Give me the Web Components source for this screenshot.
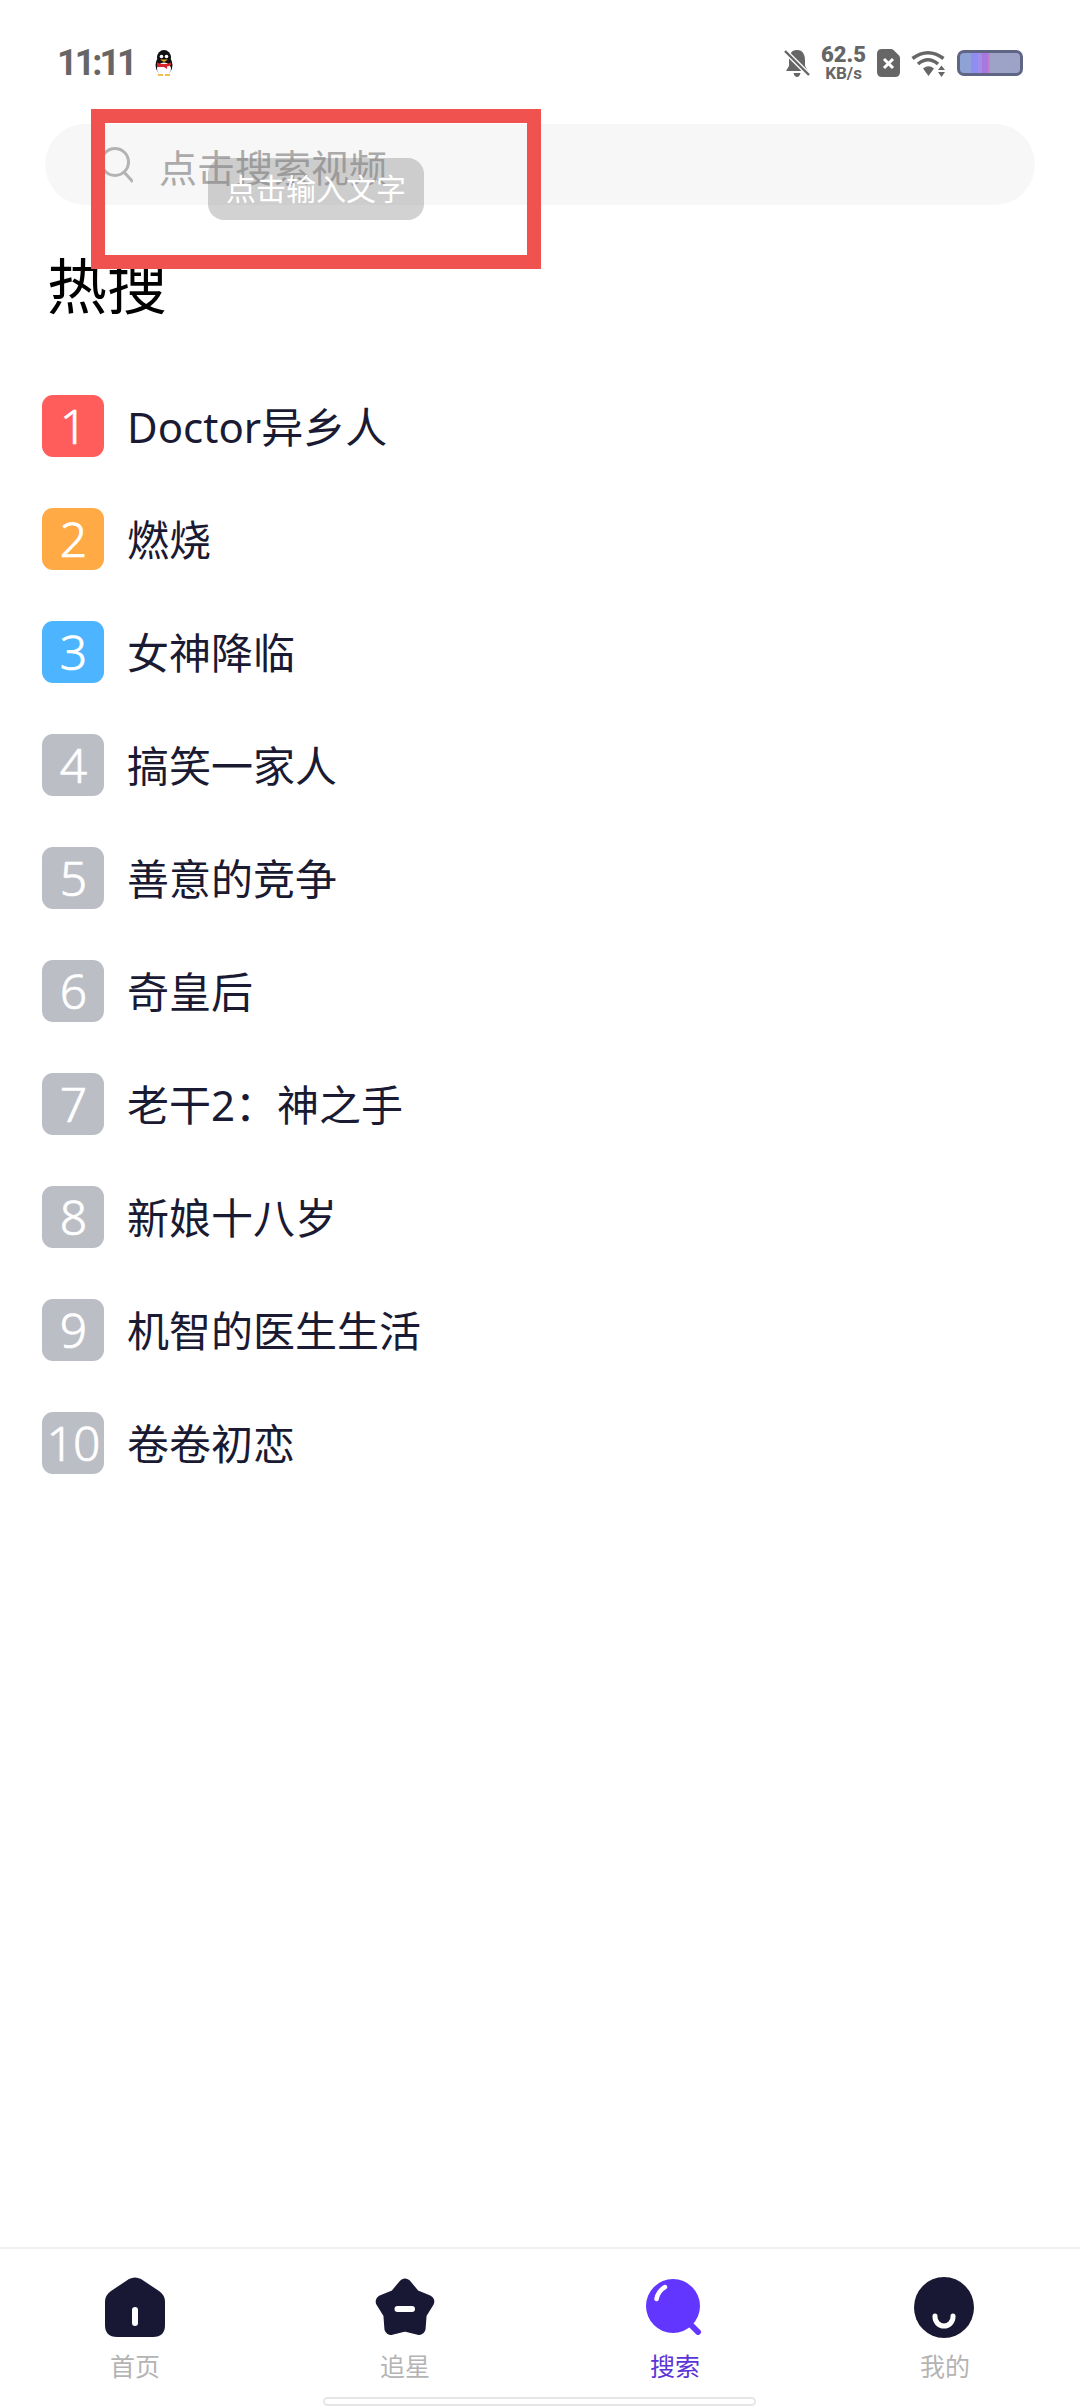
<!DOCTYPE html>
<html lang="zh">
  <head>
    <meta charset="utf-8" />
    <style>
      html, body { margin: 0; background: #fff; }
      body { font-family: "Noto Sans CJK SC", sans-serif; }
    </style>
  </head>
  <body>
    <template id="appShellTemplate">
      <style>
        :host { display: flex; flex-direction: column; width: 1080px; height: 2408px; overflow: hidden; background: #fff; }
        .fill { flex: 1; }
      </style>
      <slot name="top"></slot>
      <div class="fill"><slot></slot></div>
      <slot name="bottom"></slot>
    </template>

    <template id="statusBarTemplate">
      <style>
        :host { display: flex; align-items: center; height: 124px; padding: 2px 57px 0; box-sizing: border-box; color: #666; font-family: Roboto, sans-serif; }
        .time { font-size: 36px; font-weight: 700; letter-spacing: -3px; line-height: 1; }
        .qq { margin-left: 18px; width: 22px; height: 26px; }
        .right { margin-left: auto; display: flex; align-items: center; }
        .speed { display: flex; flex-direction: column; align-items: center; margin: 0 11px 0 11px; font-weight: 700; }
        .speed b { font-size: 22px; line-height: 20px; }
        .speed span { font-size: 17px; line-height: 16px; }
        svg { display: block; }
        .wifi { margin: 0 11px; }
        .battery { width: 66px; height: 26px; box-sizing: border-box; border: 3px solid #5f6585; border-radius: 7px;
          background: linear-gradient(90deg, #8fa2d6 0 18%, #8f8df0 18% 30%, #9d8fe8 30% 36%, #a877e0 36% 46%, #c07fd0 46% 50%, #9da3c6 50%); }
      </style>
      <span class="time">11:11</span>
      <svg class="qq" viewBox="0 0 22 26">
        <ellipse cx="11" cy="15" rx="8.5" ry="10" fill="#111" />
        <ellipse cx="11" cy="7.5" rx="7" ry="7.5" fill="#111" />
        <ellipse cx="11" cy="19" rx="7" ry="6.5" fill="#fff" />
        <circle cx="8.5" cy="6.5" r="1.8" fill="#fff" /><circle cx="13.5" cy="6.5" r="1.8" fill="#fff" />
        <path d="M7 9.5 H15 L11 12 Z" fill="#f2a81d" />
        <path d="M4 12.5 Q11 15.5 18 12.5 V15 Q15 16.5 14 16.5 V19 L11 17 H4 Z" fill="#d8232a" />
        <path d="M5 25 H10 M12 25 H17" stroke="#f2a81d" stroke-width="1.5" />
      </svg>
      <div class="right">
        <svg width="26" height="27" viewBox="0 0 24 27">
          <path d="M12 0 C18 0 20 5 20 10 V16 L23 21 H1 L4 16 V10 C4 5 6 0 12 0 Z M8.5 23 H15.5 Q14.5 27 12 27 Q9.500 27 8.500 23 Z" fill="#666" />
          <path d="M0 1 L24 25" stroke="#fff" stroke-width="5" />
          <path d="M0 1 L24 25" stroke="#666" stroke-width="2.400" />
        </svg>
        <div class="speed"><b>62.5</b><span>KB/s</span></div>
        <svg width="23" height="28" viewBox="0 0 23 28">
          <path d="M5 0 H14 Q15.500 0 16.500 1 L22 6.500 Q23 7.500 23 9 V23 Q23 28 18 28 H5 Q0 28 0 23 V5 Q0 0 5 0 Z" fill="#666" />
          <path d="M7 10 L16 19 M16 10 L7 19" stroke="#fff" stroke-width="3" />
        </svg>
        <svg class="wifi" width="35" height="27" viewBox="0 0 35 27">
          <g fill="none" stroke="#666" stroke-width="3.600">
            <path d="M1.500 8.500 Q17 -3 32.500 8.500" />
            <path d="M7 14 Q17 5.500 27 14" />
          </g>
          <path d="M12 18.500 Q17.500 14 23 18.500 L17.500 26 Z" fill="#666" />
          <path d="M27 20 L30.500 15.500 L34 20 Z M27 22 H34 L30.500 27 Z" fill="#666" />
        </svg>
        <div class="battery"></div>
      </div>
    </template>

    <template id="searchBoxTemplate">
      <style>
        :host { display: flex; align-items: center; height: 81px; margin: 0 45px; padding-left: 55px; box-sizing: border-box; border-radius: 41px; background: #f7f7f7; position: relative; }
        svg { display: block; flex: none; }
        .hint { margin-left: 26px; padding-top: 3px; font-size: 38px; line-height: 1; color: #aaa; }
      </style>
      <svg width="33" height="36" viewBox="0 0 33 36">
        <circle cx="15" cy="15" r="13.500" fill="none" stroke="#b3b3b3" stroke-width="3" />
        <path d="M24 25 L32 34" stroke="#b3b3b3" stroke-width="3" stroke-linecap="round" />
      </svg>
      <span class="hint"><slot></slot></span>
    </template>

    <template id="markBoxTemplate">
      <style>
        :host { position: absolute; left: 91px; top: 109px; width: 450px; height: 160px; box-sizing: border-box; border: 14px solid #f0524f; }
      </style>
    </template>

    <template id="tipBubbleTemplate">
      <style>
        :host { position: absolute; left: 208px; top: 158px; width: 216px; height: 62px; padding-bottom: 5px; box-sizing: border-box; display: flex; align-items: center; justify-content: center; border-radius: 16px; background: rgba(130, 130, 130, 0.36); color: #fff; font-size: 30px; line-height: 1; }
      </style>
      <slot></slot>
    </template>

    <template id="sectionTitleTemplate">
      <style>
        :host { display: block; margin: 36px 0 0 47px; font-size: 60px; line-height: 84px; color: #000; }
      </style>
      <slot></slot>
    </template>

    <template id="hotListTemplate">
      <style>
        :host { display: flex; flex-direction: column; gap: 51px; margin: 70px 0 0 42px; }
      </style>
      <slot></slot>
    </template>

    <template id="hotItemTemplate">
      <style>
        :host { display: flex; align-items: center; gap: 23px; height: 62px; color: #1a1a33; font-size: 42px; line-height: 62px; }
        .rank { flex: none; width: 62px; height: 62px; display: flex; align-items: center; justify-content: center; border-radius: 11px; background: #bcbec6; color: #fff; font-family: "Noto Sans", sans-serif; font-weight: 300; -webkit-text-stroke: 0.7px #fff; font-size: 48px; letter-spacing: -1px; line-height: 1; }
        :host([tone="red"]) .rank { background: #ff5c5c; }
        :host([tone="orange"]) .rank { background: #ffaa44; }
        :host([tone="blue"]) .rank { background: #4db4ff; }
        .name { padding-top: 2px; font-family: "Noto Sans", "Noto Sans CJK SC", sans-serif; }
      </style>
      <span class="rank"></span>
      <span class="name"><slot></slot></span>
    </template>

    <template id="tabBarTemplate">
      <style>
        :host { display: block; position: relative; height: 161px; box-sizing: border-box; border-top: 2px solid #efefef; }
        .tabs { display: flex; padding-top: 27px; }
        .pill { position: absolute; left: 323px; top: 148px; width: 433px; height: 9px; box-sizing: border-box; border: 2px solid #e6e6e6; border-radius: 5px; background: #fff; }
      </style>
      <div class="tabs"><slot></slot></div>
      <div class="pill"></div>
    </template>

    <template id="tabItemTemplate">
      <style>
        :host { flex: 1; display: flex; flex-direction: column; align-items: center; color: #b4b4b4; font-size: 25px; line-height: 30px; }
        :host([active]) { color: #5b34d6; }
        .icon { height: 62px; display: flex; align-items: center; justify-content: center; margin-bottom: 12px; }
      </style>
      <div class="icon"><slot name="icon"></slot></div>
      <slot></slot>
    </template>

    <app-shell>
      <status-bar slot="top"></status-bar>
      <search-box slot="top">点击搜索视频</search-box>
      <section-title slot="top">热搜</section-title>
      <hot-list>
        <hot-item rank="1" tone="red">Doctor异乡人</hot-item>
        <hot-item rank="2" tone="orange">燃烧</hot-item>
        <hot-item rank="3" tone="blue">女神降临</hot-item>
        <hot-item rank="4">搞笑一家人</hot-item>
        <hot-item rank="5">善意的竞争</hot-item>
        <hot-item rank="6">奇皇后</hot-item>
        <hot-item rank="7">老干2：神之手</hot-item>
        <hot-item rank="8">新娘十八岁</hot-item>
        <hot-item rank="9">机智的医生生活</hot-item>
        <hot-item rank="10">卷卷初恋</hot-item>
      </hot-list>
      <tab-bar slot="bottom">
        <tab-item>
          <svg slot="icon" width="60" height="60" viewBox="0 0 60 60">
            <path d="M24 2 Q30 -1 36 2 L54 14 Q60 18 60 25 V48 Q60 60 48 60 H12 Q0 60 0 48 V25 Q0 18 6 14 Z" fill="#181834" />
            <rect x="27" y="30" width="6" height="19" rx="3" fill="#fff" />
          </svg>
          首页
        </tab-item>
        <tab-item>
          <svg slot="icon" width="60" height="58" viewBox="0 0 60 58">
            <path d="M30 7 L39.400 18.100 L52.800 23.600 L45.200 35.900 L44.100 50.400 L30 47 L15.900 50.400 L14.800 35.900 L7.200 23.600 L20.600 18.100 Z" fill="#181834" stroke="#181834" stroke-width="13" stroke-linejoin="round" />
            <rect x="19.500" y="28" width="20.500" height="6" rx="3" fill="#fff" />
          </svg>
          追星
        </tab-item>
        <tab-item active>
          <svg slot="icon" width="56" height="56" viewBox="0 0 56 56" style="margin-left:-2px">
            <circle cx="27" cy="27" r="27" fill="#6236ff" />
            <path d="M44 45 L52 53" stroke="#6236ff" stroke-width="6" stroke-linecap="round" />
            <path d="M10.500 20 Q12 12 19 8" fill="none" stroke="#fff" stroke-width="4.500" stroke-linecap="round" />
          </svg>
          搜索
        </tab-item>
        <tab-item>
          <svg slot="icon" width="60" height="61" viewBox="0 0 60 61" style="margin-left:-2px">
            <ellipse cx="30" cy="30.500" rx="30" ry="30.500" fill="#181834" />
            <path d="M21 39 V40 A9 9 0 0 0 39 40 V39" fill="none" stroke="#fff" stroke-width="5" stroke-linecap="round" />
          </svg>
          我的
        </tab-item>
      </tab-bar>
    </app-shell>
    <mark-box></mark-box>
    <tip-bubble>点击输入文字</tip-bubble>

    <script type="text/javascript">
      function fromTemplate(id) {
        return class extends HTMLElement {
          constructor() {
            super();
            this.attachShadow({ mode: 'open' });
            this.shadowRoot.append(document.getElementById(id).content.cloneNode(true));
          }
        };
      }

      class HotItem extends fromTemplate('hotItemTemplate') {
        connectedCallback() {
          this.shadowRoot.querySelector('.rank').textContent = this.getAttribute('rank');
        }
      }

      customElements.define('app-shell', fromTemplate('appShellTemplate'));
      customElements.define('status-bar', fromTemplate('statusBarTemplate'));
      customElements.define('search-box', fromTemplate('searchBoxTemplate'));
      customElements.define('mark-box', fromTemplate('markBoxTemplate'));
      customElements.define('tip-bubble', fromTemplate('tipBubbleTemplate'));
      customElements.define('section-title', fromTemplate('sectionTitleTemplate'));
      customElements.define('hot-list', fromTemplate('hotListTemplate'));
      customElements.define('hot-item', HotItem);
      customElements.define('tab-bar', fromTemplate('tabBarTemplate'));
      customElements.define('tab-item', fromTemplate('tabItemTemplate'));
    </script>
  </body>
</html>
